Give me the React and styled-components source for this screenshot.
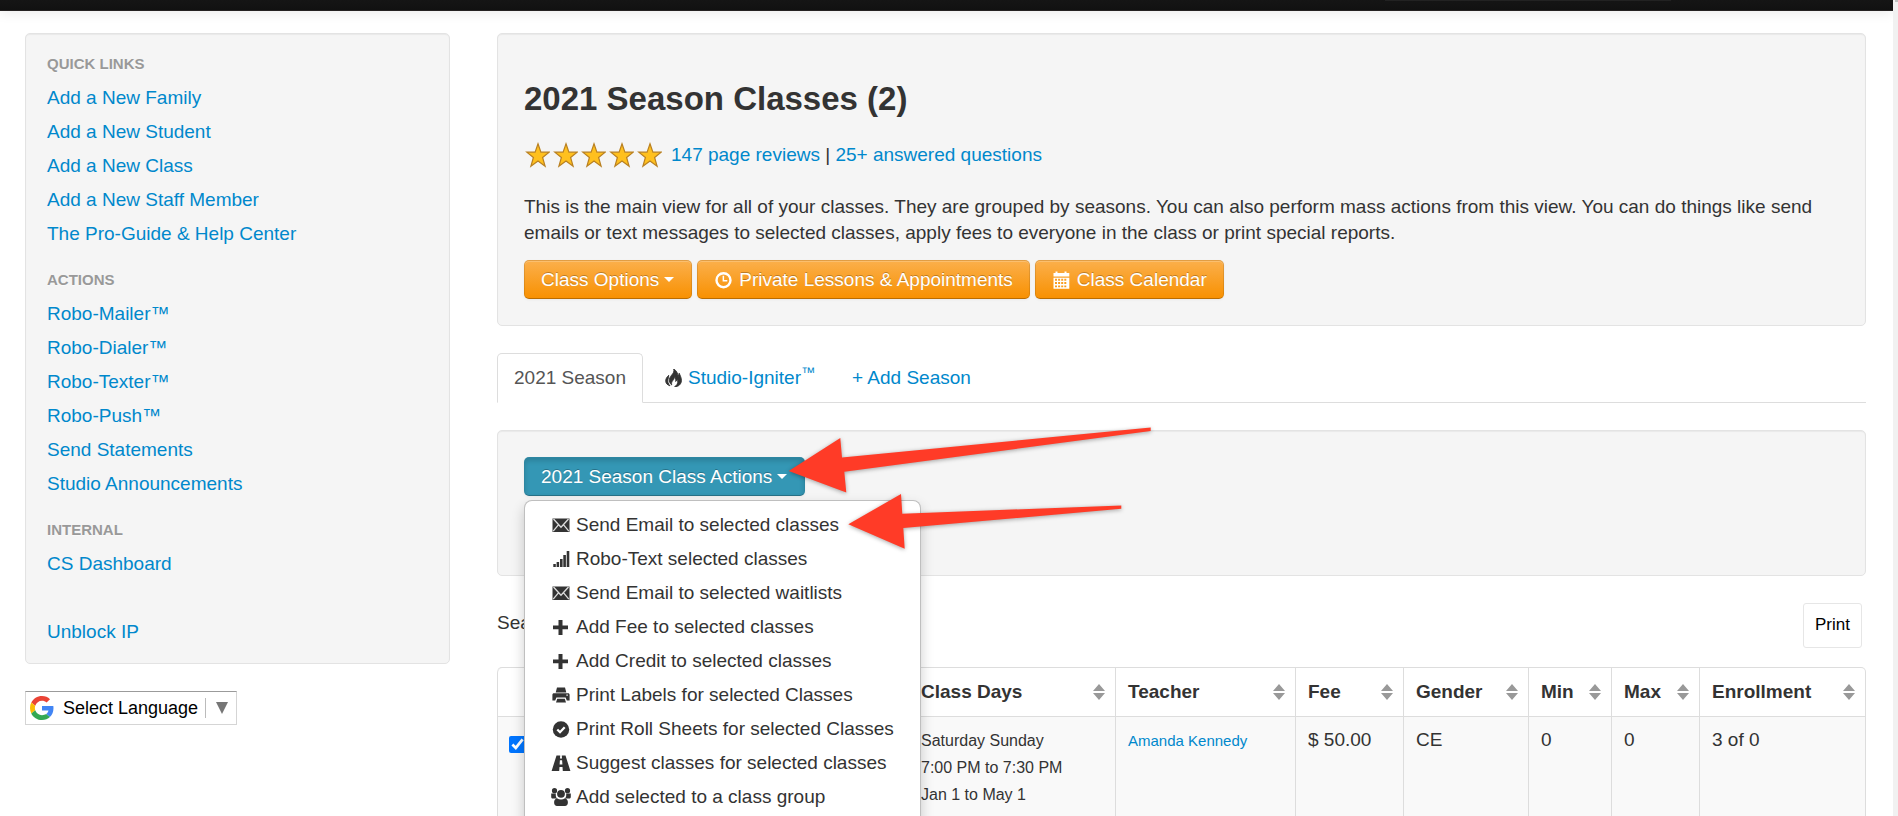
import React from "react";
import styled, { createGlobalStyle, css } from "styled-components";

const GlobalStyle = createGlobalStyle`
  * {
    box-sizing: border-box;
  }
  body {
    margin: 0;
    background: #fff;
    color: #333;
    font-family: "Liberation Sans", Arial, Helvetica, sans-serif;
    font-size: 19px;
    line-height: 26px;
  }
`;

const Page = styled.div`
  display: flex;
  height: 100vh;
  overflow: hidden;
`;

const Scroller = styled.div`
  flex: 1;
  min-width: 0;
  overflow: hidden;
`;

const ScrollTrack = styled.div`
  width: 5px;
  padding-left: 2px;
  background: #f1f1f1;
`;

const ScrollThumb = styled.div`
  height: 2px;
  background: #c1c1c1;
`;

const Navbar = styled.header`
  display: flex;
  justify-content: flex-end;
  height: 11px;
  padding-right: 222px;
  background: linear-gradient(#151515, #111);
  border-bottom: 1px solid #252222;
  box-shadow: 0 1px 13px rgba(0, 0, 0, 0.1);
`;

const NavSearchEdge = styled.div`
  width: 286px;
  height: 1px;
  background: #222;
`;

const Container = styled.div`
  display: flex;
  gap: 47px;
  padding: 22px 27px 0 25px;
`;

const Sidebar = styled.aside`
  flex: 0 0 425px;
`;

const Main = styled.main`
  flex: 1;
  min-width: 0;
`;

const Well = styled.section`
  background: #f5f5f5;
  border: 1px solid #e3e3e3;
  border-radius: 5px;
  box-shadow: inset 0 1px 1px rgba(0, 0, 0, 0.05);
`;

const Link = styled.a`
  color: #08c;
  text-decoration: none;
`;

/* ---- sidebar ---- */

const SideNav = styled(Well)`
  padding: 13px 21px 14px;
  margin-bottom: 27px;
`;

const NavHeader = styled.h2`
  margin: ${(props) => (props.$first ? "0" : "12px 0 0")};
  font-size: 15px;
  line-height: 34px;
  color: #999;
  text-shadow: 0 1px 0 rgba(255, 255, 255, 0.5);
  text-transform: uppercase;
`;

const NavList = styled.ul`
  margin: 0;
  padding: 0;
  list-style: none;
`;

const NavItem = styled.li`
  line-height: 34px;
  ${(props) => props.$spaced && "margin-top: 34px;"}
`;

const Translate = styled.label`
  display: inline-flex;
  align-items: center;
  height: 34px;
  padding: 0 8px 0 4px;
  border: 1px solid #d5d5d5;
  border-top-color: #9b9b9b;
`;

const TranslateSelect = styled.select`
  appearance: none;
  width: 142px;
  margin-left: 9px;
  padding: 0;
  border: none;
  background: none;
  color: #000;
  font-family: inherit;
  font-size: 18px;
`;

const TranslateArrow = styled.span`
  height: 20px;
  padding-left: 10px;
  border-left: 1px solid #bbb;
  color: #767676;
  line-height: 0;
`;

/* ---- header block ---- */

const Hero = styled(Well)`
  padding: 26px;
  margin-bottom: 27px;
`;

const Title = styled.h1`
  margin: 13px 0;
  font-size: 33px;
  line-height: 52px;
`;

const Reviews = styled.div`
  display: flex;
  align-items: center;
  gap: 9px;
  height: 34px;
`;

const Stars = styled.span`
  display: flex;
  gap: 2px;
`;

const Intro = styled.p`
  margin: 22px 0 14px;
`;

const ButtonRow = styled.div`
  display: flex;
  gap: 5px;
`;

const Button = styled.button`
  display: inline-flex;
  align-items: center;
  gap: 5px;
  height: 39px;
  padding: 0 16px;
  border: 1px solid rgba(0, 0, 0, 0.1);
  border-bottom-color: rgba(0, 0, 0, 0.25);
  border-radius: 5px;
  color: #fff;
  font-family: inherit;
  font-size: 19px;
  line-height: 26px;
  text-shadow: 0 -1px 0 rgba(0, 0, 0, 0.25);
  ${(props) =>
    props.$info
      ? css`
          background: #3497b5;
          box-shadow: inset 0 3px 5px rgba(0, 0, 0, 0.15),
            0 1px 3px rgba(0, 0, 0, 0.05);
        `
      : css`
          background: linear-gradient(#fbb04d, #f89000) border-box;
          box-shadow: inset 0 1px 0 rgba(255, 255, 255, 0.2),
            0 1px 3px rgba(0, 0, 0, 0.05);
        `}
`;

const Caret = styled.span`
  margin-right: 1px;
  border-top: 5px solid #fff;
  border-right: 5px solid transparent;
  border-left: 5px solid transparent;
`;

const IconBox = styled.svg`
  flex: none;
  width: 20px;
  height: 18px;
  fill: currentColor;
`;

/* ---- tabs ---- */

const Tabs = styled.nav`
  display: flex;
  gap: 3px;
  height: 50px;
  margin-bottom: 27px;
  border-bottom: 1px solid #ddd;
`;

const Tab = styled(Link)`
  display: flex;
  align-items: center;
  gap: 5px;
  height: 50px;
  padding: 0 16px;
  border: 1px solid transparent;
  ${(props) =>
    props.$active &&
    css`
      background: #fff;
      border-color: #ddd #ddd #fff;
      border-radius: 5px 5px 0 0;
      color: #555;
    `}

  svg {
    color: #333;
  }

  sup {
    font-size: 14px;
    line-height: 0;
  }
`;

/* ---- class actions ---- */

const ActionsWell = styled(Well)`
  position: relative;
  height: 146px;
  padding: 26px;
  margin-bottom: 27px;
`;

const Dropdown = styled.div`
  position: relative;
`;

const Menu = styled.ul`
  position: absolute;
  z-index: 10;
  top: 43px;
  left: 0;
  width: 397px;
  margin: 0;
  padding: 7px 0 40px;
  list-style: none;
  background: #fff;
  border: 1px solid rgba(0, 0, 0, 0.25);
  border-radius: 8px;
  box-shadow: 0 6px 13px rgba(0, 0, 0, 0.2);
`;

const MenuLink = styled.a`
  display: flex;
  align-items: center;
  gap: 5px;
  height: 34px;
  padding: 0 26px;
  color: #333;
  text-decoration: none;
  white-space: nowrap;
`;

const Arrows = styled.svg`
  position: absolute;
  z-index: 20;
  top: -4px;
  left: 290px;
  fill: #ff3b27;
  filter: drop-shadow(0 1px 2px rgba(0, 0, 0, 0.35));
  pointer-events: none;
`;

/* ---- table ---- */

const TableBar = styled.div`
  display: flex;
  align-items: flex-start;
  justify-content: space-between;
  padding-right: 4px;
  margin-bottom: 19px;
`;

const SearchInput = styled.input`
  width: 250px;
  height: 39px;
  margin-left: 6px;
  border: 1px solid #ccc;
  border-radius: 5px;
  font-size: 19px;
`;

const PrintButton = styled.button`
  height: 45px;
  padding: 0 11px 2px;
  background: #fff;
  border: 1px solid #e6e6e6;
  border-radius: 3px;
  color: #000;
  font-family: inherit;
  font-size: 17px;
`;

const Table = styled.table`
  width: 100%;
  table-layout: fixed;
  border-collapse: separate;
  border-spacing: 0;
  border: 1px solid #ddd;
  border-left: none;
  border-radius: 5px;
`;

const Th = styled.th`
  padding: 11px 10px 11px 12px;
  border-left: 1px solid #ddd;
  text-align: left;

  &:first-child {
    border-top-left-radius: 5px;
  }
`;

const HeadLabel = styled.div`
  display: flex;
  align-items: center;
  justify-content: space-between;
  white-space: nowrap;
`;

const Td = styled.td`
  height: 160px;
  padding: 10px 12px;
  border-top: 1px solid #ddd;
  border-left: 1px solid #ddd;
  background: #f9f9f9;
  vertical-align: top;
`;

const Small = styled.span`
  font-size: 16px;
`;

const TeacherLink = styled(Link)`
  font-size: 15px;
`;

const Checkbox = styled.input`
  display: block;
  width: 17px;
  height: 17px;
  margin: 9px 0 0 -1px;
`;

const icons = {
  time: (
    <path
      fillRule="evenodd"
      d="M9.5 1a8.2 8.2 0 1 1 0 16.4A8.2 8.2 0 0 1 9.5 1zm0 2.4a5.8 5.8 0 1 0 0 11.6 5.8 5.8 0 0 0 0-11.6zM8.6 4.8h1.5v4.1h3.2v1.5H8.6z"
    />
  ),
  calendar: (
    <path
      fillRule="evenodd"
      d="M1.500 2h2V.5h2V2h7V.5h2V2h2.800v3.500H1.500zM1.500 6.700h15.800v11H1.500zM3 7.800v1.900h2V7.800zm3.100 0v1.900h2V7.800zm3.100 0v1.900h2V7.800zm3.100 0v1.900h2V7.800zM3 11.100V13h2v-1.900zm3.100 0V13h2v-1.900zm3.100 0V13h2v-1.900zm3.100 0V13h2v-1.900zM3 14.400v1.900h2v-1.900zm3.100 0v1.900h2v-1.900zm3.100 0v1.900h2v-1.900zm3.100 0v1.900h2v-1.900z"
    />
  ),
  fire: (
    <path
      d="M10.700 0c.8 2.500-.5 4.200-1.900 5.900C7.300 7.800 6 9.500 6.400 12c.3 1.900 1.200 3.200 2.300 3.900-.4-1.800.1-3.300 1.300-4.600 1-1.100 1.500-2.100 1.400-3.500 1.400 1.300 1.700 3 1.200 4.600 1-.4 1.500-1.300 1.600-2.400 1.100 2.400.7 5-1.300 6.800-.4.400-.9.800-1.400 1.100 4.300-.3 6.700-2.800 6.900-6.100.2-3-1.300-5.200-2.200-7.600-.4 1.200-.5 2.300-1 3.500C14.900 4.600 13.600 1.600 10.700 0zM5.700 6.300C4 8 2.500 9.800 2.700 12.300c.2 2.200 1.900 3.900 4.300 4.500C5 14.800 4.500 12.600 5 10.300 5.300 9 5.900 7.700 5.700 6.300z"
      stroke="currentColor"
      strokeWidth="0.900"
    />
  ),
  envelope: (
    <>
      <path d="M1.500 2.500h17v13.500h-17z" />
      <path
        d="M2.500 3 10 11.200 17.500 3M2.200 15.200l5-6M17.800 15.200l-5-6"
        fill="none"
        stroke="#ddd"
        strokeWidth="1.300"
      />
    </>
  ),
  signal: (
    <path d="M2.300 14h2.500v3H2.300zM5.600 12h2.500v5H5.600zM9 9h2.600v8H9zM12.300 5h2.600v12h-2.600zM15.700 1h2.600v16h-2.600z" />
  ),
  plus: <path d="M7.500 2h4v5.500H17v3.700h-5.500V17h-4v-5.800H2V7.500h5.500z" />,
  print: (
    <path
      fillRule="evenodd"
      d="M6 1.500h8l1.300 5H4.700zM3 7.300h14c1 0 1.600.7 1.600 1.600v5.600h-2.800l-1.200-3H5.400l-1.200 3H1.400V8.900c0-.9.600-1.600 1.600-1.600zm12.400 1.200v1.300h1.400V8.500zM6.200 12.700h7.600l1.200 3.800H5z"
    />
  ),
  ok: (
    <>
      <circle cx="10" cy="9.500" r="8.200" />
      <path
        d="m6.300 9.500 2.700 2.700 4.700-5"
        fill="none"
        stroke="#fff"
        strokeWidth="2.300"
      />
    </>
  ),
  road: (
    <path
      fillRule="evenodd"
      d="M5.500 1.500h3.700l-.2 3h2l-.2-3h3.700L19.400 17h-7.600l-.3-4h-3l-.3 4H.6zM8.900 6.200l-.3 4.200h2.800l-.3-4.200z"
    />
  ),
  group: (
    <>
      <circle cx="3.500" cy="2.700" r="2.600" />
      <circle cx="16.500" cy="2.700" r="2.600" />
      <path d="M.2 5.500h4.600v1.800c0 1.500.5 2.400 1.300 3.300H1.600C.7 10.600.2 9.800.2 9zM19.800 5.500h-4.600v1.800c0 1.500-.5 2.400-1.300 3.300h4.500c.9 0 1.400-.8 1.400-1.600z" />
      <circle cx="10" cy="5.800" r="3.900" />
      <path d="M6 10.200c2.400 1.600 5.600 1.600 8 0 1.700.6 2.900 1.900 2.900 4.100 0 2.600-1.200 3.700-2.900 3.700H6c-1.700 0-2.900-1.100-2.900-3.700 0-2.200 1.200-3.500 2.900-4.100z" />
    </>
  ),
};

const Icon = ({ name }) => (
  <IconBox viewBox="0 0 20 18" aria-hidden="true">
    {icons[name]}
  </IconBox>
);

const Star = () => (
  <svg width="26" height="26" viewBox="0 0 26 26" aria-hidden="true">
    <path
      d="M14 1.800l2.900 8.400h8.300l-6.600 5.300 2.500 8.800-7.100-5.200-7.100 5.200 2.500-8.800-6.600-5.300h8.300z"
      fill="#ffc01e"
      stroke="#b98021"
      strokeWidth="1.200"
    />
  </svg>
);

const GoogleLogo = () => (
  <svg width="24" height="24" viewBox="0 0 48 48" aria-hidden="true">
    <path
      fill="#ea4335"
      d="M24 9.500c3.540 0 6.710 1.220 9.210 3.600l6.850-6.850C35.900 2.380 30.470 0 24 0 14.620 0 6.510 5.380 2.560 13.220l7.980 6.190C12.430 13.720 17.740 9.500 24 9.500z"
    />
    <path
      fill="#4285f4"
      d="M46.980 24.550c0-1.570-.15-3.090-.38-4.550H24v9.020h12.940c-.58 2.960-2.260 5.480-4.780 7.180l7.730 6c4.510-4.180 7.090-10.360 7.090-17.650z"
    />
    <path
      fill="#fbbc05"
      d="M10.530 28.590c-.48-1.450-.76-2.990-.76-4.590s.27-3.140.76-4.590l-7.980-6.190C.92 16.460 0 20.120 0 24c0 3.880.92 7.540 2.560 10.780l7.970-6.190z"
    />
    <path
      fill="#34a853"
      d="M24 48c6.480 0 11.930-2.130 15.890-5.810l-7.730-6c-2.150 1.450-4.920 2.300-8.160 2.300-6.260 0-11.570-4.220-13.470-9.910l-7.980 6.190C6.510 42.620 14.620 48 24 48z"
    />
  </svg>
);

const SortIcon = () => (
  <svg width="12" height="16" viewBox="0 0 12 16" aria-hidden="true">
    <path d="M6 0l6 7H0zM6 16l6-7H0z" fill="#999" />
  </svg>
);

const quickLinks = [
  "Add a New Family",
  "Add a New Student",
  "Add a New Class",
  "Add a New Staff Member",
  "The Pro-Guide & Help Center",
];

const actionLinks = [
  "Robo-Mailer™",
  "Robo-Dialer™",
  "Robo-Texter™",
  "Robo-Push™",
  "Send Statements",
  "Studio Announcements",
];

const menuItems = [
  { icon: "envelope", text: "Send Email to selected classes" },
  { icon: "signal", text: "Robo-Text selected classes" },
  { icon: "envelope", text: "Send Email to selected waitlists" },
  { icon: "plus", text: "Add Fee to selected classes" },
  { icon: "plus", text: "Add Credit to selected classes" },
  { icon: "print", text: "Print Labels for selected Classes" },
  { icon: "ok", text: "Print Roll Sheets for selected Classes" },
  { icon: "road", text: "Suggest classes for selected classes" },
  { icon: "group", text: "Add selected to a class group" },
];

const columns = [
  { label: "Class Days", width: 207 },
  { label: "Teacher", width: 180 },
  { label: "Fee", width: 108 },
  { label: "Gender", width: 125 },
  { label: "Min", width: 83 },
  { label: "Max", width: 88 },
  { label: "Enrollment", width: 166 },
];

const LinkList = ({ items }) => (
  <NavList>
    {items.map((item) => (
      <NavItem key={item}>
        <Link href="#">{item}</Link>
      </NavItem>
    ))}
  </NavList>
);

const App = () => {
  const [open, setOpen] = React.useState(true);
  const [selected, setSelected] = React.useState(true);

  return (
    <Page>
      <GlobalStyle />
      <Scroller>
        <Navbar>
          <NavSearchEdge />
        </Navbar>
        <Container>
          <Sidebar>
            <SideNav>
              <NavHeader $first>Quick Links</NavHeader>
              <LinkList items={quickLinks} />
              <NavHeader>Actions</NavHeader>
              <LinkList items={actionLinks} />
              <NavHeader>Internal</NavHeader>
              <NavList>
                <NavItem>
                  <Link href="#">CS Dashboard</Link>
                </NavItem>
                <NavItem $spaced>
                  <Link href="#">Unblock IP</Link>
                </NavItem>
              </NavList>
            </SideNav>
            <Translate>
              <GoogleLogo />
              <TranslateSelect aria-label="Language">
                <option>Select Language</option>
              </TranslateSelect>
              <TranslateArrow>
                <svg width="12" height="20" viewBox="0 0 12 20">
                  <path d="M0 4h12L6 16z" fill="currentColor" />
                </svg>
              </TranslateArrow>
            </Translate>
          </Sidebar>

          <Main>
            <Hero>
              <Title>2021 Season Classes (2)</Title>
              <Reviews>
                <Stars>
                  {[1, 2, 3, 4, 5].map((n) => (
                    <Star key={n} />
                  ))}
                </Stars>
                <span>
                  <Link href="#">147 page reviews</Link> |{" "}
                  <Link href="#">25+ answered questions</Link>
                </span>
              </Reviews>
              <Intro>
                This is the main view for all of your classes. They are grouped
                by seasons. You can also perform mass actions from this view.
                You can do things like send emails or text messages to selected
                classes, apply fees to everyone in the class or print special
                reports.
              </Intro>
              <ButtonRow>
                <Button type="button">
                  Class Options <Caret />
                </Button>
                <Button type="button">
                  <Icon name="time" />
                  Private Lessons &amp; Appointments
                </Button>
                <Button type="button">
                  <Icon name="calendar" />
                  Class Calendar
                </Button>
              </ButtonRow>
            </Hero>

            <Tabs>
              <Tab href="#" $active>
                2021 Season
              </Tab>
              <Tab href="#">
                <Icon name="fire" />
                <span>
                  Studio-Igniter<sup>™</sup>
                </span>
              </Tab>
              <Tab href="#">+ Add Season</Tab>
            </Tabs>

            <ActionsWell>
              <Dropdown>
                <Button type="button" $info onClick={() => setOpen(!open)}>
                  2021 Season Class Actions <Caret />
                </Button>
                {open && (
                  <Menu>
                    {menuItems.map((item) => (
                      <li key={item.text}>
                        <MenuLink href="#">
                          <Icon name={item.icon} />
                          {item.text}
                        </MenuLink>
                      </li>
                    ))}
                  </Menu>
                )}
              </Dropdown>
              <Arrows width="365" height="124" viewBox="788 427 365 124">
                <path d="M788.700 471 840.300 438l1.700 19.500 308.700-30v3.500L844.300 471.700l2 20.800z" />
                <path d="M848.300 524.300 901 494l1.300 19.700 219-8.200v3.200L903.300 528l1.400 20.700z" />
              </Arrows>
            </ActionsWell>

            <TableBar>
              <label>
                Search:
                <SearchInput type="text" />
              </label>
              <PrintButton type="button">Print</PrintButton>
            </TableBar>

            <Table>
              <colgroup>
                <col width="50" />
                <col />
                {columns.map((col) => (
                  <col key={col.label} width={col.width} />
                ))}
              </colgroup>
              <thead>
                <tr>
                  <Th />
                  <Th />
                  {columns.map((col) => (
                    <Th key={col.label}>
                      <HeadLabel>
                        {col.label}
                        <SortIcon />
                      </HeadLabel>
                    </Th>
                  ))}
                </tr>
              </thead>
              <tbody>
                <tr>
                  <Td>
                    <Checkbox
                      type="checkbox"
                      aria-label="Select class"
                      checked={selected}
                      onChange={(e) => setSelected(e.target.checked)}
                    />
                  </Td>
                  <Td />
                  <Td>
                    <Small>Saturday Sunday</Small>
                    <br />
                    <Small>7:00 PM to 7:30 PM</Small>
                    <br />
                    <Small>Jan 1 to May 1</Small>
                  </Td>
                  <Td>
                    <TeacherLink href="#">Amanda Kennedy</TeacherLink>
                  </Td>
                  <Td>$ 50.00</Td>
                  <Td>CE</Td>
                  <Td>0</Td>
                  <Td>0</Td>
                  <Td>3 of 0</Td>
                </tr>
              </tbody>
            </Table>
          </Main>
        </Container>
      </Scroller>
      <ScrollTrack>
        <ScrollThumb />
      </ScrollTrack>
    </Page>
  );
};

export default App;
